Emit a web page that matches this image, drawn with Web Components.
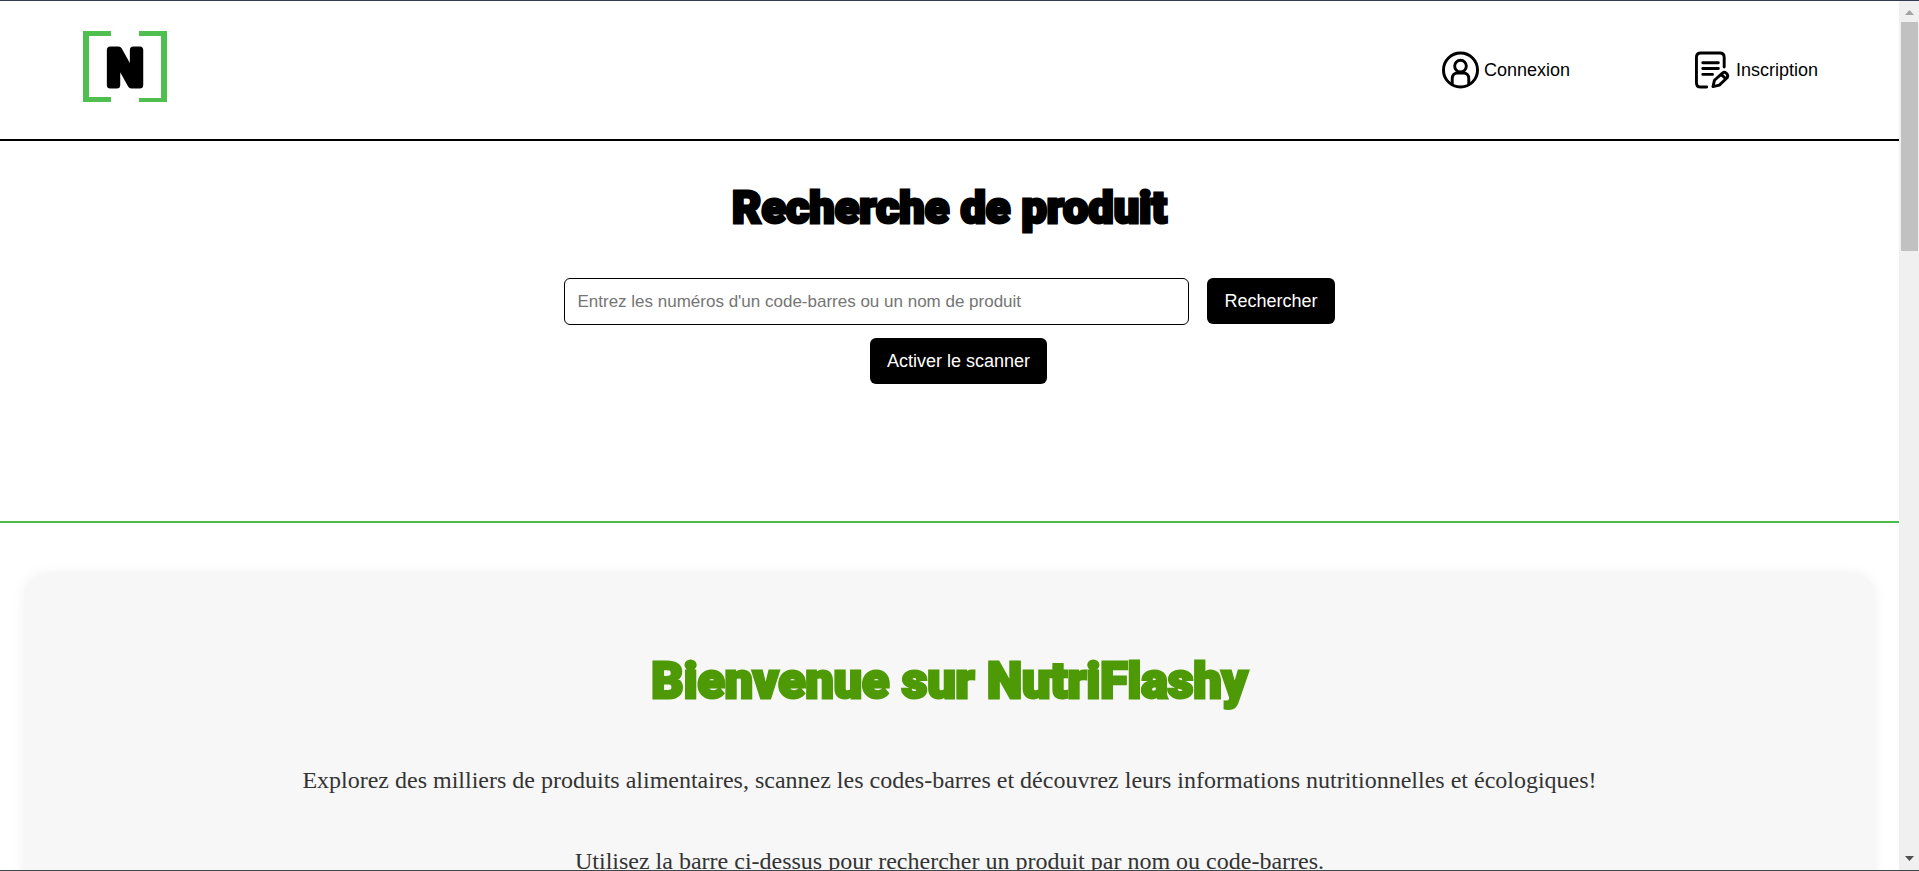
<!DOCTYPE html>
<html lang="fr">
<head>
<meta charset="utf-8">
<title>NutriFlashy</title>
<style>
  html, body { margin: 0; height: 100%; overflow: hidden; }
  body { font-family: "Liberation Sans", Arial, sans-serif; font-size: 18px; color: #000; background: #fff; }
</style>
</head>
<body>
<nf-window>
  <nf-header>
    <nf-nav-link kind="user">Connexion</nf-nav-link>
    <nf-nav-link kind="form">Inscription</nf-nav-link>
  </nf-header>
  <nf-search></nf-search>
  <nf-welcome>
    <span slot="title">Bienvenue sur NutriFlashy</span>
    <p>Explorez des milliers de produits alimentaires, scannez les codes-barres et découvrez leurs informations nutritionnelles et écologiques!</p>
    <p>Utilisez la barre ci-dessus pour rechercher un produit par nom ou code-barres.</p>
  </nf-welcome>
</nf-window>

<script>
class NfElement extends HTMLElement {
  constructor() {
    super();
    this.attachShadow({ mode: "open" }).innerHTML = this.render();
  }
}

customElements.define("nf-window", class extends NfElement {
  render() {
    return `<style>
      :host { display: grid; grid-template-columns: minmax(0, 1fr) 20px; height: 100vh; box-sizing: border-box;
              border-top: 1px solid #2f3b52; border-bottom: 1px solid #3a4a4c; overflow: hidden; }
      main { overflow: hidden; min-height: 0; }
      nf-scrollbar { min-height: 0; }
    </style>
    <main><slot></slot></main><nf-scrollbar></nf-scrollbar>`;
  }
});

customElements.define("nf-scrollbar", class extends NfElement {
  render() {
    return `<style>
      :host { display: flex; flex-direction: column; align-items: center; background: #f0f0f0; }
      svg { display: block; flex: none; }
      .track { flex: 1; width: 17px; }
      .thumb { height: 229px; background: #c1c1c1; }
    </style>
    <svg width="20" height="21"><path d="M6 14 10.500 9 15 14z" fill="#a3a3a3"/></svg>
    <div class="track"><div class="thumb"></div></div>
    <svg width="20" height="20"><path d="M6 6 10.500 11 15 6z" fill="#505050"/></svg>`;
  }
});

customElements.define("nf-logo", class extends NfElement {
  render() {
    return `<style>
      :host { display: block; }
      a, svg { display: block; }
      text { font: 700 50px "Liberation Sans", Arial, sans-serif; }
    </style>
    <a href="#" aria-label="NutriFlashy"><svg width="84" height="72" viewBox="0 0 84 72">
      <path d="M28 0H0V71H28V66H6V5H28zM56 0H84V71H56V67H78V5H56z" fill="#4fbf4f"/>
      <text x="42" y="54" text-anchor="middle" stroke="#000" stroke-width="7" stroke-linejoin="round">N</text>
    </svg></a>`;
  }
});

customElements.define("nf-header", class extends NfElement {
  render() {
    return `<style>
      :host { display: flex; align-items: center; justify-content: space-between; height: 138px;
              padding: 0 81px 0 83px; border-bottom: 2px solid #000; }
      nf-logo { margin-bottom: 6px; }
      nav { display: flex; gap: 124px; }
    </style>
    <nf-logo></nf-logo><nav><slot></slot></nav>`;
  }
});

const ICONS = {
  user: `<circle cx="19" cy="19" r="17.500"/><circle cx="19" cy="15" r="6"/>
         <path d="M10.500 34V28C10.500 24 13 22 16 22H22C25 22 27.500 24 27.500 28V34"/>`,
  form: `<path d="M31 16V6Q31 1.500 26.500 1.500H7Q2.500 1.500 2.500 6V32Q2.500 36.500 7 36.500H13M9 11.500H25M9 17.500H25M9 23.500H19"/>
         <path d="M19.500 36 21 29.500 29.500 22Q31.500 20.500 33.500 22.500T34 27L26 34.500zM28 23.500 32 27.500"/>`
};

customElements.define("nf-nav-link", class extends NfElement {
  render() {
    return `<style>
      :host { display: block; }
      a { display: flex; align-items: center; gap: 5px; color: #000; text-decoration: none; line-height: 22px; }
      svg { display: block; fill: none; stroke: #000; stroke-width: 3; stroke-linecap: round; stroke-linejoin: round; }
    </style>
    <a href="#"><svg width="37" height="38" viewBox="0 0 38 38" aria-hidden="true">${ICONS[this.getAttribute("kind")]}</svg><slot></slot></a>`;
  }
});

customElements.define("nf-search", class extends NfElement {
  render() {
    return `<style>
      :host { display: block; height: 380px; border-bottom: 2px solid #4cbb4c; text-align: center; }
      h1 { margin: 0; padding-top: 37px; font: 900 45px/60px Roboto, sans-serif; -webkit-text-stroke: 3px #000;
           text-shadow: 1px 0 #000, -1px 0 #000; }
      form { display: flex; justify-content: center; margin-top: 40px; }
      input { box-sizing: border-box; width: 625px; height: 47px; padding: 0 12px; border: 1px solid #000; border-radius: 6px;
              font: 17px "Liberation Sans", Arial, sans-serif; background: #fff; }
      input::placeholder { color: #757575; opacity: 1; }
      button { height: 46px; padding: 0 17px; margin-left: 18px; border: 0; border-radius: 6px; background: #000; color: #fff;
               font: 18px "Liberation Sans", Arial, sans-serif; }
      .scan { display: flex; justify-content: center; margin-top: 13px; }
    </style>
    <h1>Recherche de produit</h1>
    <form><input type="text" aria-label="Recherche" placeholder="Entrez les numéros d'un code-barres ou un nom de produit"><button type="button">Rechercher</button></form>
    <div class="scan"><button type="button">Activer le scanner</button></div>`;
  }
});

customElements.define("nf-welcome", class extends NfElement {
  render() {
    return `<style>
      :host { display: block; margin: 50px 24px 0; padding: 73px 40px 60px; border-radius: 24px; background: #f7f7f7;
              box-shadow: 0 0 14px rgba(0, 0, 0, .06); text-align: center; }
      h2 { margin: 0; font: 900 50px/70px Roboto, sans-serif; color: #4e9a06; -webkit-text-stroke: 3px #4e9a06;
           text-shadow: 1px 0 #4e9a06, -1px 0 #4e9a06; }
      ::slotted(p) { margin: 48px 0 0; font: 24px/33px "Liberation Serif", "Times New Roman", serif; color: #333; }
    </style>
    <h2><slot name="title"></slot></h2><slot></slot>`;
  }
});
</script>
</body>
</html>
